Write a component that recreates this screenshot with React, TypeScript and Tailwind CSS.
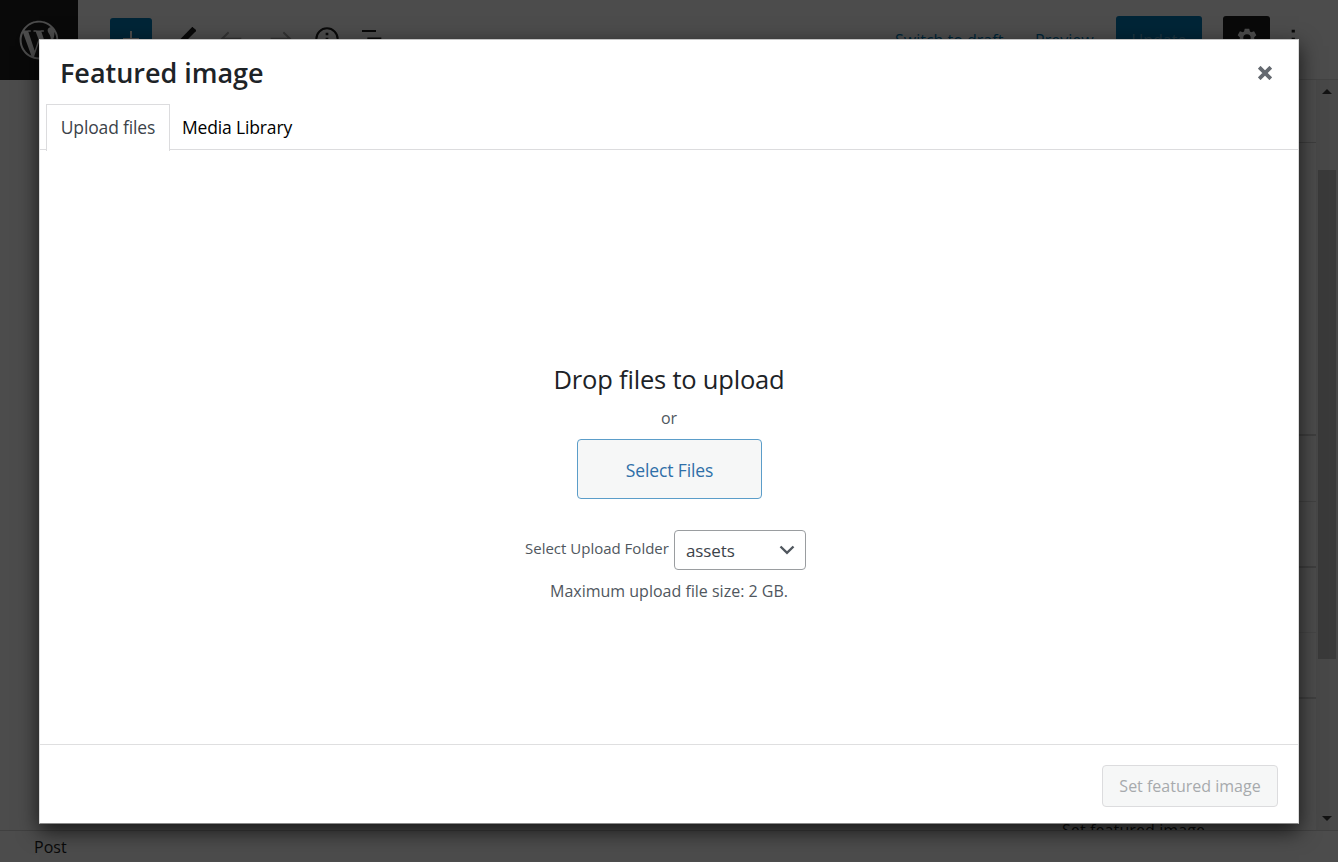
import React from "react";
import { FaWordpressSimple } from "react-icons/fa";

function EditorHeader() {
  return (
    <header className="flex h-20 shrink-0 items-center border-b border-[#e0e0e0] bg-white">
      <div className="flex h-20 w-[78px] shrink-0 items-center justify-center bg-[#1e1e1e]">
        <FaWordpressSimple className="size-10 text-white" />
      </div>
      <div className="ml-8 flex items-center pb-[2px]">
        <button className="flex size-[42px] items-center justify-center rounded-[3px] bg-[#007cba]">
          <svg viewBox="0 0 24 24" className="size-8" fill="none" stroke="#fff" strokeWidth="1.5">
            <path d="M12 6v12M6 12h12" />
          </svg>
        </button>
        <svg viewBox="0 0 24 24" className="ml-[17px] size-8" fill="#1e1e1e">
          <path d="m20.1 5.1-2-1.8c-.4-.3-.8-.3-1.1 0L6.2 14.5 4.4 19l4.5-1.6L20.1 6.2c.3-.4.3-.8 0-1.1Z" />
        </svg>
        <svg viewBox="0 0 24 24" className="ml-[15px] size-8" fill="none" stroke="#aaa" strokeWidth="1.5">
          <path d="M9.5 7 4.5 11.9l5 5M4.5 11.9H19" />
        </svg>
        <svg viewBox="0 0 24 24" className="ml-4 size-8" fill="none" stroke="#aaa" strokeWidth="1.5">
          <path d="m14.5 7 5 4.9-5 5M19.5 11.9H5" />
        </svg>
        <svg viewBox="0 0 24 24" className="ml-[15px] size-8" fill="none" stroke="#1e1e1e" strokeWidth="1.5">
          <circle cx="12" cy="12" r="8" />
          <path d="M12 11v5M12 7.4v1.8" strokeWidth="2" />
        </svg>
        <svg viewBox="0 0 24 24" className="ml-[13px] size-8" fill="none" stroke="#1e1e1e" strokeWidth="1.6">
          <path d="M4.5 6h10.5M8.5 11.7H19M8.5 17H19" />
        </svg>
      </div>
      <div className="ml-auto flex items-center text-[16px] text-[#007cba]">
        <span className="w-[110px] whitespace-nowrap">Switch to draft</span>
        <span className="ml-[30px] w-[81px]">Preview</span>
        <button className="flex h-[48px] w-[86px] items-center justify-center rounded-[3px] bg-[#007cba] text-white/40">
          Update
        </button>
        <button className="ml-[21px] flex h-[48px] w-[47px] items-center justify-center rounded-[3px] bg-[#1e1e1e] pb-[3px]">
          <svg viewBox="0 0 24 24" className="size-8" fill="#fff">
            <path
              fillRule="evenodd"
              d="M10.3 5h3.4l.5 2.1 1 .6 2.1-.7 1.7 3-1.6 1.4v1.2l1.6 1.4-1.7 3-2.1-.7-1 .6-.5 2.1h-3.4l-.5-2.1-1-.6-2.1.7-1.7-3 1.6-1.4v-1.2L5 10l1.7-3 2.1.7 1-.6.5-2.1ZM12 9.2a2.8 2.8 0 1 0 0 5.6 2.8 2.8 0 0 0 0-5.6Z"
            />
          </svg>
        </button>
        <svg viewBox="0 0 24 24" className="mr-[29px] mb-[2px] ml-[7px] size-8" fill="#1e1e1e">
          <path d="M11 5h2.4v2.2H11zM11 11h2.4v2.2H11zM11 17h2.4v2.2H11z" />
        </svg>
      </div>
    </header>
  );
}

function SettingsSidebar() {
  return (
    <aside className="flex w-[367px] flex-col">
      <div className="h-[63px] shrink-0 border-b border-[#d0d0d0]" />
      <div className="h-[293px] shrink-0 border-b-2 border-[#d4d4d4]" />
      <div className="h-[66px] shrink-0 border-b border-[#dedede]" />
      <div className="h-[66px] shrink-0 border-b-2 border-[#d4d4d4]" />
      <div className="h-[65px] shrink-0 border-b border-[#ececec]" />
      <div className="h-[66px] shrink-0 border-b-2 border-[#d8d8d8]" />
      <div className="flex grow items-end pl-[113px]">
        <span className="-mb-[12px] whitespace-nowrap text-[16px] leading-6 tracking-[0.1px] text-[#1e1e1e]">
          Set featured image
        </span>
      </div>
    </aside>
  );
}

function Scrollbar() {
  return (
    <div className="flex w-[22px] flex-col items-center bg-[#f1f1f1] text-[#404040]">
      <svg viewBox="0 0 10 5" className="mt-[9px] h-[5px] w-[10px]" fill="currentColor">
        <path d="M0 5 5 0l5 5Z" />
      </svg>
      <div className="mt-[76px] h-[489px] w-[18px] bg-[#c1c1c1]" />
      <svg viewBox="0 0 10 5" className="mt-auto mb-[9px] h-[5px] w-[10px]" fill="currentColor">
        <path d="M0 0 5 5l5-5Z" />
      </svg>
    </div>
  );
}

function MediaModal() {
  return (
    <div
      role="dialog"
      aria-label="Featured image"
      className="absolute top-[39px] left-[39px] flex h-[785px] w-[1260px] flex-col border-t border-r border-b border-l border-t-[#c4c4c4] border-r-[#dcdcdc] border-b-[#8a8a8a] border-l-[#dcdcdc] bg-white shadow-[0_7px_20px_rgba(0,0,0,0.7)]"
    >
      <div className="flex h-16 shrink-0 items-center justify-between pr-[26px] pb-px pl-5">
        <h1 className="mt-[2px] text-[27px] leading-8 font-semibold tracking-[-0.03px] whitespace-nowrap text-[#1d2327]">
          Featured image
        </h1>
        <button aria-label="Close" className="mt-[2px]">
          <svg viewBox="0 0 14 14" className="size-[14px]" fill="none" stroke="#646970" strokeWidth="3.8">
            <path d="m1.2 1.2 11.6 11.6M12.8 1.2 1.2 12.8" />
          </svg>
        </button>
      </div>
      <nav className="flex h-[46px] shrink-0 border-b border-[#dcdcde] pl-[6px] text-[17.5px] tracking-[-0.15px]">
        <div className="-mb-[2px] flex w-[124px] items-center justify-center border border-b-0 border-[#dcdcde] bg-white pb-[2px] whitespace-nowrap text-[#3c434a]">
          Upload files
        </div>
        <div className="flex items-center pt-px pl-3 whitespace-nowrap text-black">Media Library</div>
      </nav>
      <main className="flex grow flex-col items-center text-[#50575e]">
        <h2 className="mt-[211px] text-[25.5px] leading-9 tracking-[-0.2px] whitespace-nowrap text-[#1d2327]">
          Drop files to upload
        </h2>
        <p className="mt-[9px] text-[16px] leading-6">or</p>
        <button className="mt-[9px] ml-px flex h-[60px] w-[185px] items-center justify-center rounded-[4px] border border-[#5b9dc9] bg-[#f6f7f7] pt-[2px] text-[17.5px] tracking-[-0.1px] text-[#2f6fa8]">
          Select Files
        </button>
        <div className="mt-[31px] mr-[7px] flex h-10 w-[281px] items-center justify-between whitespace-nowrap">
          <label className="-mt-[3px] text-[15px]">Select Upload Folder</label>
          <div className="flex h-10 w-[132px] items-center justify-between rounded-[4px] border border-[#9a9da0] pr-[10px] pl-[11px] text-[17px] text-[#3c434a]">
            <span className="pt-[2px] tracking-[-0.1px]">assets</span>
            <svg viewBox="0 0 16 10" className="h-[10px] w-4" fill="none" stroke="#50575e" strokeWidth="2.4">
              <path d="m1.5 1.5 6.5 6.3 6.5-6.3" />
            </svg>
          </div>
        </div>
        <p className="mt-[9px] text-[16px] leading-6 whitespace-nowrap">Maximum upload file size: 2 GB.</p>
      </main>
      <footer className="flex h-[79px] shrink-0 items-center justify-end border-t border-[#dfdfe0] pt-[3px] pr-5">
        <button className="flex h-[42px] w-[176px] items-center justify-center rounded-[4px] border border-[#dcdcde] bg-[#f6f7f7] text-[16px] whitespace-nowrap text-[#a7aaad]">
          Set featured image
        </button>
      </footer>
    </div>
  );
}

export default function App() {
  return (
    <div className="relative h-[862px] w-[1338px] overflow-hidden bg-white font-['Open_Sans','Noto_Sans',sans-serif]">
      <div className="flex h-full flex-col">
        <EditorHeader />
        <div className="flex h-[750px] justify-end overflow-hidden">
          <SettingsSidebar />
          <Scrollbar />
        </div>
        <div className="flex h-8 items-center border-t border-[#d8d8d8] bg-white pt-px pl-[34px] text-[16px] text-[#1e1e1e]">
          Post
        </div>
      </div>
      <div className="absolute inset-0 bg-black/70" />
      <MediaModal />
    </div>
  );
}
